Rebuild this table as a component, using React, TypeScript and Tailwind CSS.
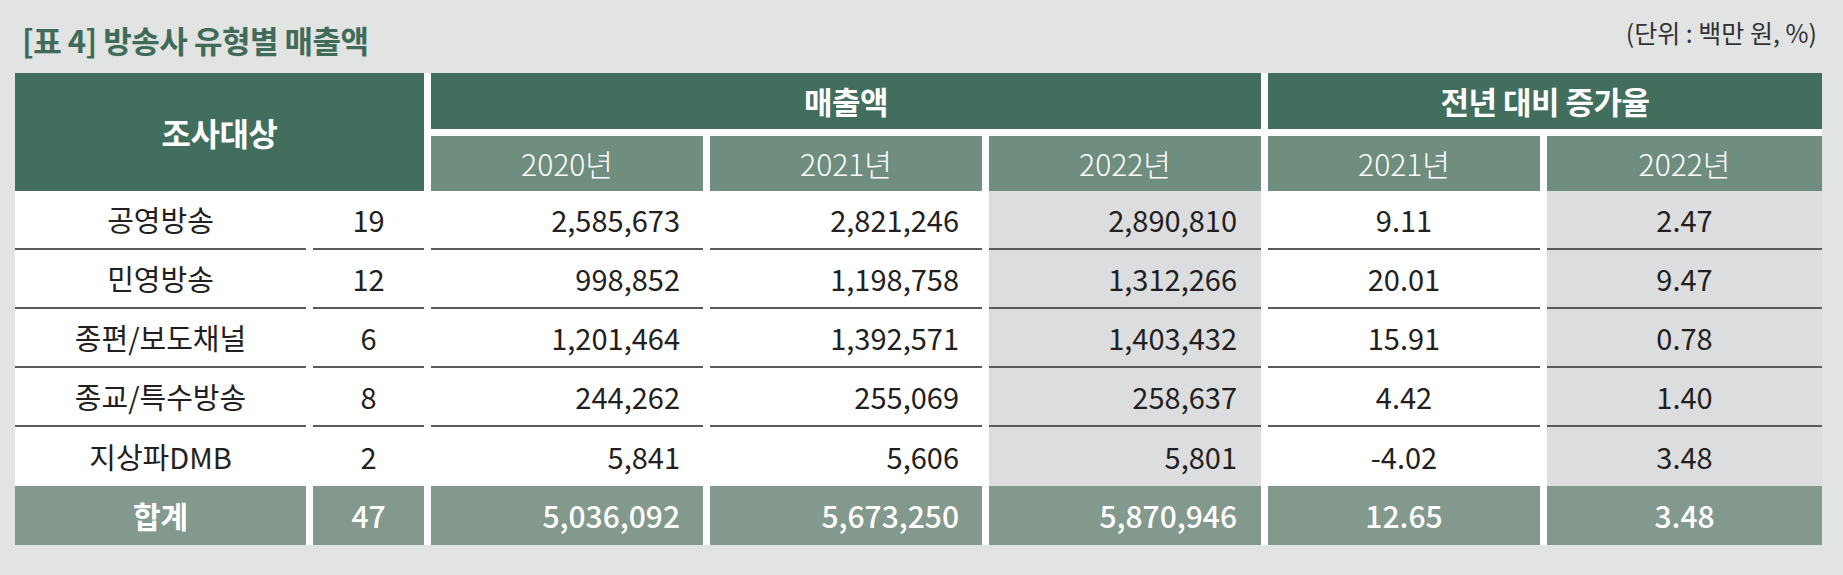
import React from "react";

type Row = {
  name: string;
  count: string;
  s2020: string;
  s2021: string;
  s2022: string;
  g2021: string;
  g2022: string;
};

const rows: Row[] = [
  { name: "공영방송", count: "19", s2020: "2,585,673", s2021: "2,821,246", s2022: "2,890,810", g2021: "9.11", g2022: "2.47" },
  { name: "민영방송", count: "12", s2020: "998,852", s2021: "1,198,758", s2022: "1,312,266", g2021: "20.01", g2022: "9.47" },
  { name: "종편/보도채널", count: "6", s2020: "1,201,464", s2021: "1,392,571", s2022: "1,403,432", g2021: "15.91", g2022: "0.78" },
  { name: "종교/특수방송", count: "8", s2020: "244,262", s2021: "255,069", s2022: "258,637", g2021: "4.42", g2022: "1.40" },
  { name: "지상파DMB", count: "2", s2020: "5,841", s2021: "5,606", s2022: "5,801", g2021: "-4.02", g2022: "3.48" },
];

const total: Row = {
  name: "합계",
  count: "47",
  s2020: "5,036,092",
  s2021: "5,673,250",
  s2022: "5,870,946",
  g2021: "12.65",
  g2022: "3.48",
};

export default function App() {
  return (
    <div
      className="w-[1843px] h-[575px] bg-[#e2e4e3] pl-[15px] pr-[21px]"
      style={{ fontFamily: '"Noto Sans CJK KR", "Noto Sans", sans-serif' }}
    >
      <div className="flex justify-between h-[73px]">
        <div className="pl-[7px] pt-[20px] text-[31px] leading-[40px] font-bold text-[#3f6b58] tracking-[-0.5px]">
          [표 4] 방송사 유형별 매출액
        </div>
        <div className="pr-[5px] pt-[16px] text-[25px] leading-[32px] text-[#333333]">
          (단위 : 백만 원, %)
        </div>
      </div>

      <div className="grid bg-white grid-cols-[291px_111px_272px_272px_272px_272px_275px] grid-rows-[56px_7px_55px_59px_59px_59px_59px_59px_59px] gap-x-[7px] text-[#231f20]">
        {/* header */}
        <div className="col-start-1 col-end-3 row-start-1 row-end-4 bg-[#426f5d] flex items-center justify-center text-white text-[32px] font-bold tracking-[-0.5px]">
          조사대상
        </div>
        <div className="col-start-3 col-end-6 row-start-1 bg-[#426f5d] flex items-center justify-center text-white text-[31px] font-bold tracking-[-0.5px]">
          매출액
        </div>
        <div className="col-start-6 col-end-8 row-start-1 bg-[#426f5d] flex items-center justify-center text-white text-[31px] font-bold tracking-[-0.5px]">
          전년 대비 증가율
        </div>
        <div className="col-start-3 col-end-8 row-start-2 bg-white" />
        <div className="col-start-3 row-start-3 bg-[#708e80] flex items-center justify-center text-white text-[30px] font-light">
          2020년
        </div>
        <div className="col-start-4 row-start-3 bg-[#708e80] flex items-center justify-center text-white text-[30px] font-light">
          2021년
        </div>
        <div className="col-start-5 row-start-3 bg-[#708e80] flex items-center justify-center text-white text-[30px] font-light">
          2022년
        </div>
        <div className="col-start-6 row-start-3 bg-[#708e80] flex items-center justify-center text-white text-[30px] font-light">
          2021년
        </div>
        <div className="col-start-7 row-start-3 bg-[#708e80] flex items-center justify-center text-white text-[30px] font-light">
          2022년
        </div>

        {/* data rows */}
        {rows.map((r, i) => {
          const line = i < rows.length - 1 ? "border-b-2 border-[#5a5a5a]" : "";
          const base = `flex items-center text-[29px] font-normal ${line}`;
          return (
            <React.Fragment key={r.name}>
              <div className={`${base} col-start-1 justify-center bg-white`}>{r.name}</div>
              <div className={`${base} justify-center bg-white`}>{r.count}</div>
              <div className={`${base} justify-end pr-[23px] bg-white`}>{r.s2020}</div>
              <div className={`${base} justify-end pr-[23px] bg-white`}>{r.s2021}</div>
              <div className={`${base} justify-end pr-[24px] bg-[#dcdddf]`}>{r.s2022}</div>
              <div className={`${base} justify-center bg-white`}>{r.g2021}</div>
              <div className={`${base} justify-center bg-[#dcdddf]`}>{r.g2022}</div>
            </React.Fragment>
          );
        })}

        {/* total */}
        <div className="col-start-1 bg-[#83998d] flex items-center justify-center text-white text-[30px] font-bold">{total.name}</div>
        <div className="bg-[#83998d] flex items-center justify-center text-white text-[30px] font-medium">{total.count}</div>
        <div className="bg-[#83998d] flex items-center justify-end pr-[23px] text-white text-[30px] font-medium">{total.s2020}</div>
        <div className="bg-[#83998d] flex items-center justify-end pr-[23px] text-white text-[30px] font-medium">{total.s2021}</div>
        <div className="bg-[#83998d] flex items-center justify-end pr-[24px] text-white text-[30px] font-medium">{total.s2022}</div>
        <div className="bg-[#83998d] flex items-center justify-center text-white text-[30px] font-medium">{total.g2021}</div>
        <div className="bg-[#83998d] flex items-center justify-center text-white text-[30px] font-medium">{total.g2022}</div>
      </div>
    </div>
  );
}
